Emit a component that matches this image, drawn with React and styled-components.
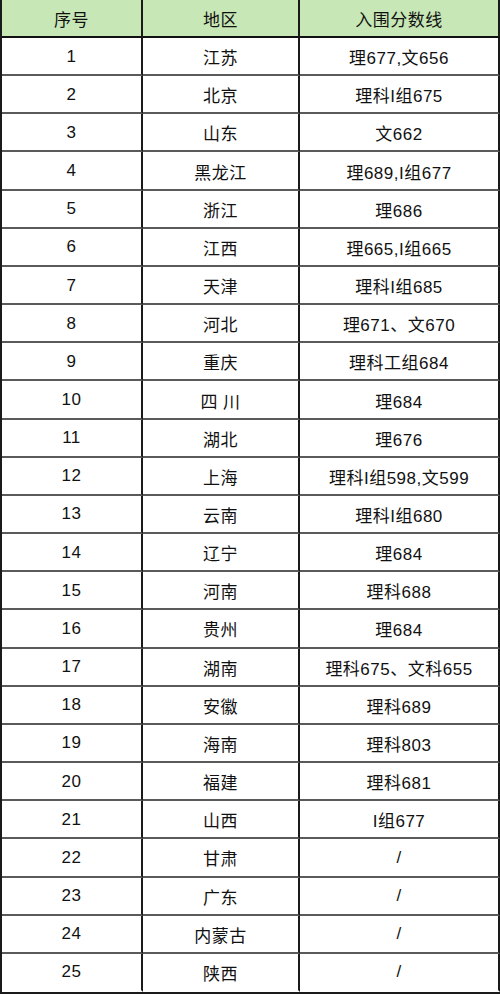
import React from "react";
import styled, { createGlobalStyle } from "styled-components";

const GlobalStyle = createGlobalStyle`
  html, body {
    margin: 0;
    padding: 0;
    background: #fff;
  }
  body {
    font-family: "Liberation Sans", Arial, "Noto Sans CJK SC", sans-serif;
  }
`;

const rows = [
  ["1", "江苏", "理677,文656"],
  ["2", "北京", "理科I组675"],
  ["3", "山东", "文662"],
  ["4", "黑龙江", "理689,I组677"],
  ["5", "浙江", "理686"],
  ["6", "江西", "理665,I组665"],
  ["7", "天津", "理科I组685"],
  ["8", "河北", "理671、文670"],
  ["9", "重庆", "理科工组684"],
  ["10", "四 川", "理684"],
  ["11", "湖北", "理676"],
  ["12", "上海", "理科I组598,文599"],
  ["13", "云南", "理科I组680"],
  ["14", "辽宁", "理684"],
  ["15", "河南", "理科688"],
  ["16", "贵州", "理684"],
  ["17", "湖南", "理科675、文科655"],
  ["18", "安徽", "理科689"],
  ["19", "海南", "理科803"],
  ["20", "福建", "理科681"],
  ["21", "山西", "I组677"],
  ["22", "甘肃", "/"],
  ["23", "广东", "/"],
  ["24", "内蒙古", "/"],
  ["25", "陕西", "/"],
];

const Table = styled.div`
  display: grid;
  grid-template-columns: 141px 157px 200px;
  grid-template-rows: 38px repeat(25, 1fr);
  width: 500px;
  height: 994px;
  box-sizing: border-box;
  border-left: 2px solid #1a1a1a;
  border-bottom: 2px solid #1a1a1a;
`;

const Cell = styled.div`
  display: flex;
  align-items: center;
  justify-content: center;
  font-size: 17px;
  letter-spacing: 0.5px;
  color: #111;
  white-space: pre;
  background: ${(p) => (p.$head ? "#c8e7b6" : "#fff")};
  border-right: 2px solid #1a1a1a;
  border-bottom: 2px solid ${(p) => (p.$head ? "#111" : p.$last ? "transparent" : "#5a5a5a")};
  box-sizing: border-box;
  min-height: 0;
  padding-top: 1px;
`;

export default function App() {
  return (
    <>
      <GlobalStyle />
      <Table>
        <Cell $head>序号</Cell>
        <Cell $head>地区</Cell>
        <Cell $head>入围分数线</Cell>
        {rows.map((r, i) =>
          r.map((v, j) => (
            <Cell key={`${i}-${j}`} $last={i === rows.length - 1}>
              {v}
            </Cell>
          ))
        )}
      </Table>
    </>
  );
}
